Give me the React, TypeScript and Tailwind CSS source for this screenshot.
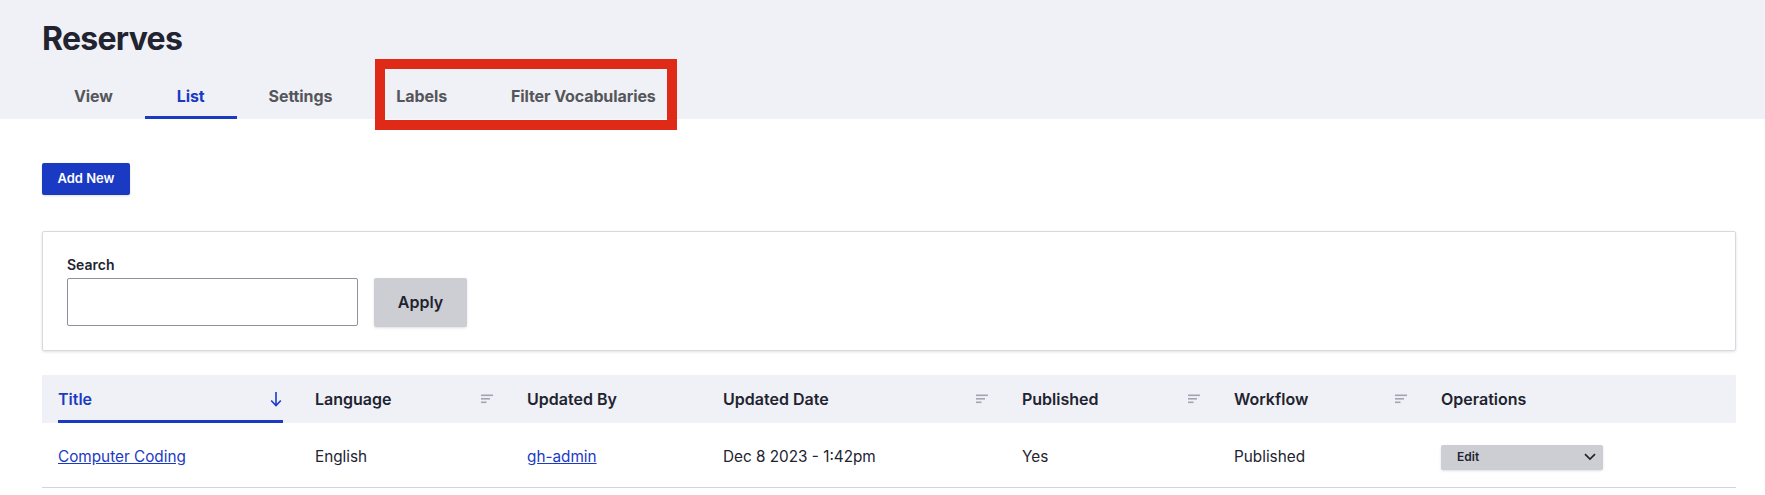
// App.tsx
import React from 'react';

const tabs = ['View', 'List', 'Settings', 'Labels', 'Filter Vocabularies'];

const columns = [
  { label: 'Title', width: 'w-[257px]' },
  { label: 'Language', width: 'w-[212px]', sort: true },
  { label: 'Updated By', width: 'w-[196px]' },
  { label: 'Updated Date', width: 'w-[299px]', sort: true },
  { label: 'Published', width: 'w-[212px]', sort: true },
  { label: 'Workflow', width: 'w-[207px]', sort: true },
  { label: 'Operations', width: 'w-auto' },
];

function SortIcon() {
  return (
    <svg width="12" height="10" viewBox="0 0 12 10" className="text-[#a3a4b2]" fill="currentColor">
      <rect x="0" y="0.5" width="12" height="1.6" />
      <rect x="0" y="4" width="9" height="1.6" />
      <rect x="0" y="7.5" width="5.5" height="1.6" />
    </svg>
  );
}

function ArrowIcon() {
  return (
    <svg width="12" height="16" viewBox="0 0 12 16" fill="none" stroke="#1b3ac4" strokeWidth="1.6">
      <path d="M6 1v13.5" />
      <path d="M1.2 9.5 6 14.5l4.8-5" />
    </svg>
  );
}

function App() {
  return (
    <div className="relative h-[495px] w-[1765px] overflow-hidden bg-white font-['Inter',sans-serif] text-[#222330]">
      <div className="h-[119px] bg-[#f0f1f6] pl-[42px]">
        <h1 className="pt-[19px] text-[32px] font-bold leading-[39px] tracking-[-0.7px]">Reserves</h1>
        <div className="mt-[2px] flex">
          {tabs.map((tab) => (
            <a
              key={tab}
              className={
                tab === 'List'
                  ? 'flex h-[59px] items-center border-b-[3px] border-[#1b3ac4] px-8 pt-[15px] text-base font-bold tracking-[-0.1px] text-[#1b3ac4]'
                  : 'flex h-[59px] items-center border-b-[3px] border-transparent px-8 pt-[15px] text-base font-bold tracking-[-0.1px] text-[#55565b]'
              }
            >
              {tab}
            </a>
          ))}
        </div>
      </div>

      <div className="pl-[42px] pr-[29px]">
        <button className="mt-[44px] block h-8 w-[88px] rounded-[2px] bg-[#1b3ac4] text-[13px] font-semibold text-white shadow-sm">
          Add New
        </button>

        <div className="mt-9 h-[120px] rounded-[2px] border border-[#d8d9e0] pl-6 pt-[23px] shadow-[0_1px_3px_rgba(0,0,0,0.12)]">
          <label className="block text-sm font-semibold leading-[20px]">Search</label>
          <div className="mt-[3px] flex gap-4">
            <input className="h-[48px] w-[291px] rounded-[2px] border border-[#8e929c] bg-white" />
            <button className="h-[49px] w-[93px] rounded-[2px] bg-[#cdced3] pb-[1px] text-base font-semibold shadow-sm">Apply</button>
          </div>
        </div>

        <table className="mt-[24px] w-full table-fixed border-collapse">
          <thead>
            <tr className="h-12 bg-[#f0f1f6]">
              {columns.map((col) => (
                <th key={col.label} className={`${col.width} p-0 text-left text-base font-semibold`}>
                  {col.label === 'Title' ? (
                    <div className="mx-4 flex h-12 items-center justify-between border-b-[3px] border-[#1b3ac4] pr-[1px] pt-[3px] text-[#1b3ac4]">
                      {col.label}
                      <ArrowIcon />
                    </div>
                  ) : (
                    <div className="flex h-12 items-center justify-between pl-4 pr-[18px]">
                      {col.label}
                      {col.sort && <SortIcon />}
                    </div>
                  )}
                </th>
              ))}
            </tr>
          </thead>
          <tbody>
            <tr className="h-16 border-b border-[#d3d4d9] text-[15.3px]">
              <td className="px-4 pt-[5px]">
                <a className="text-[#1b3ac4] underline">Computer Coding</a>
              </td>
              <td className="px-4 pt-[5px]">English</td>
              <td className="px-4 pt-[5px]">
                <a className="text-[#1b3ac4] underline">gh-admin</a>
              </td>
              <td className="px-4 pt-[5px]">Dec 8 2023 - 1:42pm</td>
              <td className="px-4 pt-[5px]">Yes</td>
              <td className="px-4 pt-[5px]">Published</td>
              <td className="px-4 pt-[5px]">
                <div className="flex h-[25px] w-[162px] items-center justify-between rounded-[2px] bg-[#cdced3] pl-4 pr-[7px] text-xs font-semibold shadow-sm">
                  Edit
                  <svg width="12" height="8" viewBox="0 0 12 8" fill="none" stroke="#222330" strokeWidth="1.7">
                    <path d="M1 1.2 6 6l5-4.8" />
                  </svg>
                </div>
              </td>
            </tr>
          </tbody>
        </table>
      </div>

      {/* annotation box drawn over the tabs */}
      <div className="absolute left-[375px] top-[59px] h-[71px] w-[302px] border-[10px] border-[#df2a17]" />
    </div>
  );
}

export default App;
